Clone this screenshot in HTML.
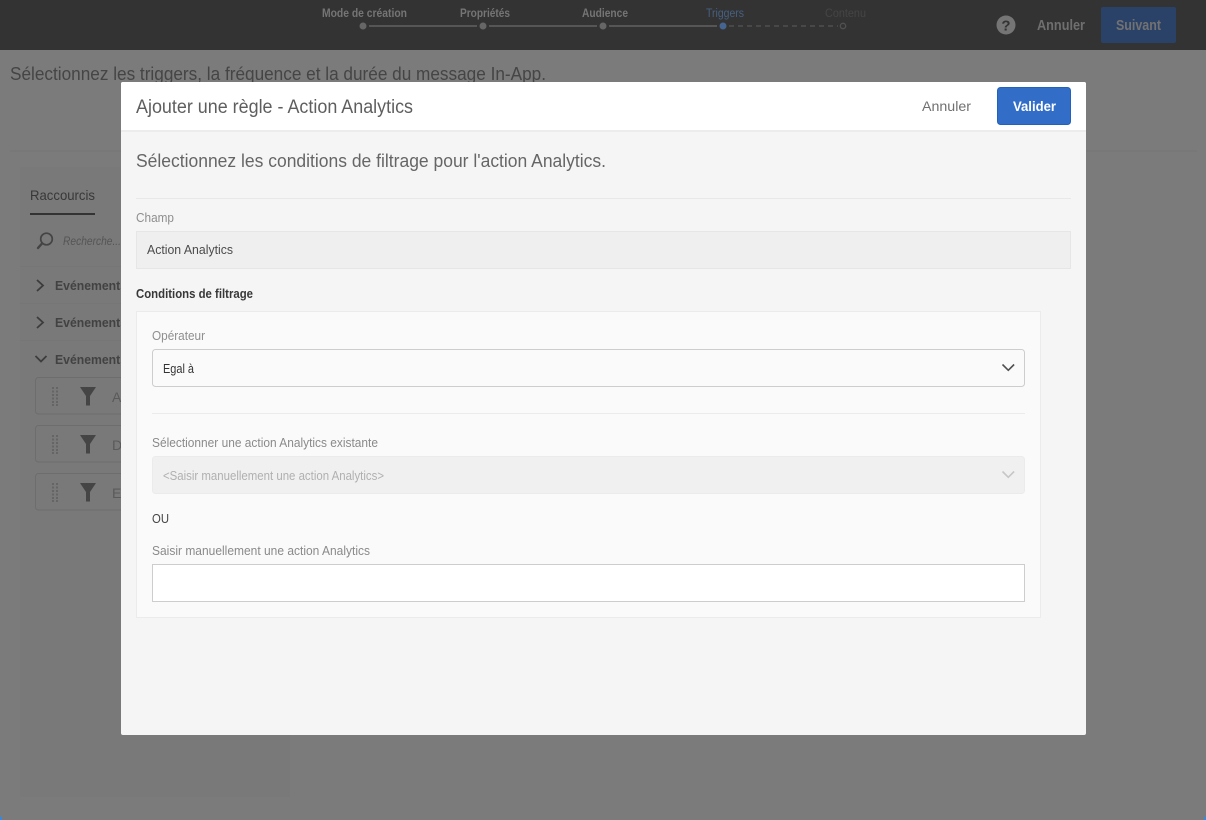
<!DOCTYPE html>
<html lang="fr">
<head>
<meta charset="utf-8">
<title>Ajouter une règle - Action Analytics</title>
<style>
html,body{margin:0;padding:0;width:1206px;height:820px;overflow:hidden;background:#7b7b7b}
svg{display:block;position:absolute;left:0;top:0}
text{font-family:"Liberation Sans",sans-serif;white-space:pre}
</style>
</head>
<body>
<svg width="1206" height="820" viewBox="0 0 1206 820" xmlns="http://www.w3.org/2000/svg">
<rect width="1206" height="820" fill="#7b7b7b"/>
<!-- top bar -->
<rect width="1206" height="50" fill="#333"/>
<g font-size="11.5" font-weight="bold">
<text x="322" y="17" fill="#757575" textLength="85" lengthAdjust="spacingAndGlyphs">Mode de création</text>
<text x="460" y="17" fill="#757575" textLength="50" lengthAdjust="spacingAndGlyphs">Propriétés</text>
<text x="582" y="17" fill="#757575" textLength="46" lengthAdjust="spacingAndGlyphs">Audience</text>
<text x="706" y="17" fill="#466082" font-weight="normal" textLength="38" lengthAdjust="spacingAndGlyphs">Triggers</text>
<text x="825" y="17" fill="#454545" font-weight="normal" textLength="41" lengthAdjust="spacingAndGlyphs">Contenu</text>
</g>
<g stroke="#626262" stroke-width="1.5">
<line x1="369" y1="26" x2="477" y2="26"/>
<line x1="489" y1="26" x2="597" y2="26"/>
<line x1="609" y1="26" x2="717" y2="26"/>
<line x1="729" y1="26" x2="838" y2="26" stroke="#505050" stroke-dasharray="5 4"/>
</g>
<circle cx="363" cy="26" r="3.5" fill="#666"/>
<circle cx="483" cy="26" r="3.5" fill="#666"/>
<circle cx="603" cy="26" r="3.5" fill="#666"/>
<circle cx="723" cy="26" r="3.5" fill="#45648f"/>
<circle cx="843" cy="26" r="2.7" fill="none" stroke="#505050" stroke-width="1.3"/>
<circle cx="1006" cy="25" r="9.500" fill="#757575"/>
<text x="1006" y="30.500" font-size="15" font-weight="bold" fill="#333" text-anchor="middle">?</text>
<text x="1037" y="30" font-size="14.500" font-weight="bold" fill="#6f6f6f" textLength="48" lengthAdjust="spacingAndGlyphs">Annuler</text>
<rect x="1101" y="7" width="75" height="36" rx="2" fill="#2a4268"/>
<text x="1116" y="30" font-size="14.500" font-weight="bold" fill="#727272" textLength="45" lengthAdjust="spacingAndGlyphs">Suivant</text>

<!-- background page -->
<text x="10" y="80" font-size="18" fill="#454545" textLength="536" lengthAdjust="spacingAndGlyphs">Sélectionnez les triggers, la fréquence et la durée du message In-App.</text>
<line x1="10" y1="151" x2="1197" y2="151" stroke="#757575"/>
<rect x="20" y="167" width="270" height="630" fill="#797979"/>
<text x="30" y="200" font-size="14" fill="#383838" textLength="65" lengthAdjust="spacingAndGlyphs">Raccourcis</text>
<rect x="30" y="213" width="65" height="2" fill="#333"/>
<circle cx="46.500" cy="239" r="5.800" fill="none" stroke="#444" stroke-width="1.700"/>
<line x1="42" y1="243.500" x2="38" y2="248" stroke="#444" stroke-width="2.400" stroke-linecap="round"/>
<text x="63" y="245" font-size="12" font-style="italic" fill="#555" textLength="58" lengthAdjust="spacingAndGlyphs">Recherche...</text>
<line x1="20" y1="266.500" x2="290" y2="266.500" stroke="#767676"/>
<line x1="20" y1="303.500" x2="290" y2="303.500" stroke="#767676"/>
<line x1="20" y1="340.500" x2="290" y2="340.500" stroke="#767676"/>
<g fill="none" stroke="#3c3c3c" stroke-width="1.800">
<path d="M37 280l6 5.500-6 5.500"/>
<path d="M37 317l6 5.500-6 5.500"/>
<path d="M35.500 356l5.500 5.500 5.500-5.500"/>
</g>
<g font-size="12.500" font-weight="bold" fill="#424242">
<text x="55" y="290" textLength="72" lengthAdjust="spacingAndGlyphs">Evénements</text>
<text x="55" y="327" textLength="72" lengthAdjust="spacingAndGlyphs">Evénements</text>
<text x="55" y="364" textLength="72" lengthAdjust="spacingAndGlyphs">Evénements</text>
</g>
<g fill="none" stroke="#6d6d6d">
<rect x="35.500" y="377.500" width="100" height="36.500" rx="3"/>
<rect x="35.500" y="425.500" width="100" height="36.500" rx="3"/>
<rect x="35.500" y="473.500" width="100" height="36.500" rx="3"/>
</g>
<defs>
<g id="card">
<g fill="#656565">
<rect x="52" y="0" width="2" height="2"/><rect x="56" y="0" width="2" height="2"/>
<rect x="52" y="3.500" width="2" height="2"/><rect x="56" y="3.500" width="2" height="2"/>
<rect x="52" y="7" width="2" height="2"/><rect x="56" y="7" width="2" height="2"/>
<rect x="52" y="10.500" width="2" height="2"/><rect x="56" y="10.500" width="2" height="2"/>
<rect x="52" y="14" width="2" height="2"/><rect x="56" y="14" width="2" height="2"/>
<rect x="52" y="17" width="2" height="2"/><rect x="56" y="17" width="2" height="2"/>
</g>
<path d="M80 0h16l-6 9v9.500h-4V9z" fill="#454545"/>
</g>
</defs>
<use href="#card" x="0" y="387"/>
<use href="#card" x="0" y="435"/>
<use href="#card" x="0" y="483"/>
<g font-size="14" fill="#5a5a5a">
<text x="112" y="402">Ac</text>
<text x="112" y="450">De</text>
<text x="112" y="498">Et</text>
</g>

<!-- modal -->
<rect x="121" y="82" width="965" height="653" rx="2" fill="#f5f5f5"/>
<path d="M121 130V84a2 2 0 0 1 2-2h961a2 2 0 0 1 2 2v46z" fill="#fff"/>
<rect x="121" y="130" width="965" height="2" fill="#ececec"/>
<text x="136" y="113" font-size="19" fill="#5e5e5e" textLength="277" lengthAdjust="spacingAndGlyphs">Ajouter une règle - Action Analytics</text>
<text x="922" y="111" font-size="14" fill="#707070" textLength="49" lengthAdjust="spacingAndGlyphs">Annuler</text>
<rect x="997.500" y="87.500" width="73" height="37" rx="3" fill="#326ec8" stroke="#2362ba"/>
<text x="1013" y="111" font-size="14" font-weight="bold" fill="#fff" textLength="43" lengthAdjust="spacingAndGlyphs">Valider</text>

<text x="136" y="167" font-size="18" fill="#666" textLength="470" lengthAdjust="spacingAndGlyphs">Sélectionnez les conditions de filtrage pour l'action Analytics.</text>
<line x1="136" y1="198.500" x2="1071" y2="198.500" stroke="#e8e8e8"/>
<text x="136" y="222" font-size="13" fill="#8e8e8e" textLength="38" lengthAdjust="spacingAndGlyphs">Champ</text>
<rect x="136.500" y="231.500" width="934" height="37" fill="#efefef" stroke="#e6e6e6"/>
<text x="147" y="254" font-size="13" fill="#4b4b4b" textLength="86" lengthAdjust="spacingAndGlyphs">Action Analytics</text>
<text x="136" y="298" font-size="13" font-weight="bold" fill="#383838" textLength="117" lengthAdjust="spacingAndGlyphs">Conditions de filtrage</text>

<rect x="136.500" y="311.500" width="904" height="306" fill="#fafafa" stroke="#ebebeb"/>
<text x="152" y="340" font-size="13" fill="#8e8e8e" textLength="53" lengthAdjust="spacingAndGlyphs">Opérateur</text>
<rect x="152.500" y="349.500" width="872" height="37" rx="3" fill="#fafafa" stroke="#cdcdcd"/>
<text x="163" y="373" font-size="13" fill="#333" textLength="31" lengthAdjust="spacingAndGlyphs">Egal à</text>
<path d="M1002.500 364.500l5.800 5.800 5.800-5.800" fill="none" stroke="#505050" stroke-width="1.600"/>
<line x1="152" y1="413.500" x2="1025" y2="413.500" stroke="#ebebeb"/>
<text x="152" y="447" font-size="13" fill="#8a8a8a" textLength="226" lengthAdjust="spacingAndGlyphs">Sélectionner une action Analytics existante</text>
<rect x="152.500" y="456.500" width="872" height="37" rx="3" fill="#f0f0f0" stroke="#ebebeb"/>
<text x="163" y="480" font-size="13" fill="#b0b0b0" textLength="221" lengthAdjust="spacingAndGlyphs">&lt;Saisir manuellement une action Analytics&gt;</text>
<path d="M1002.500 471.500l5.800 5.800 5.800-5.800" fill="none" stroke="#c6c6c6" stroke-width="1.600"/>
<text x="152" y="523" font-size="13" fill="#444" textLength="17" lengthAdjust="spacingAndGlyphs">OU</text>
<text x="152" y="555" font-size="13" fill="#8a8a8a" textLength="218" lengthAdjust="spacingAndGlyphs">Saisir manuellement une action Analytics</text>
<rect x="152.500" y="564.500" width="872" height="37" fill="#fff" stroke="#cdcdcd"/>

<!-- corner pixels -->
<rect x="0" y="817" width="2" height="3" fill="#2d8ceb"/>
<rect x="1204" y="817" width="2" height="3" fill="#2d8ceb"/>
</svg>
</body>
</html>
